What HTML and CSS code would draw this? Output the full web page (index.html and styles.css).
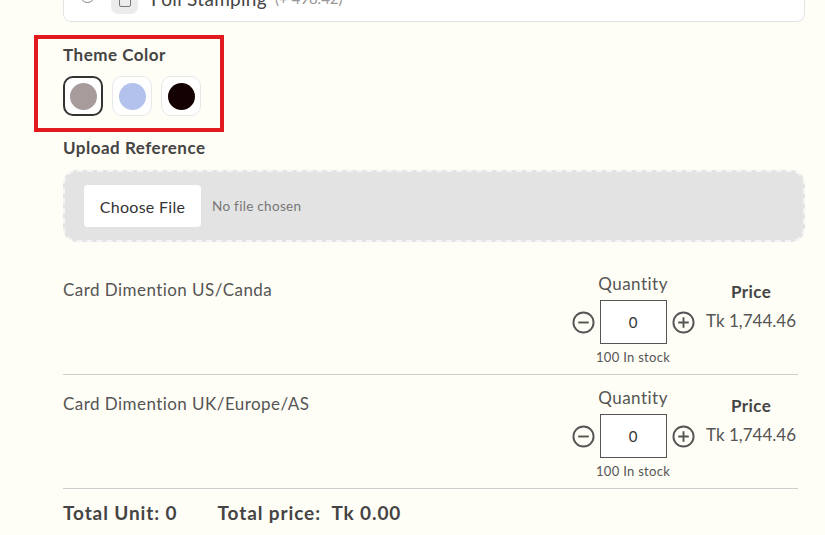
FILE: index.html
```html
<!DOCTYPE html>
<html lang="en">
<head>
<meta charset="utf-8">
<title>Card Options</title>
<link rel="stylesheet" href="styles.css">
</head>
<body>
<div class="page">
  <div class="option-card">
    <span class="radio"></span>
    <span class="opt-icon"><span class="opt-icon-inner"></span></span>
    <span class="opt-name">Foil Stamping</span>
    <span class="opt-price">(+ 498.42)</span>
  </div>

  <div class="theme-box">
    <div class="label">Theme Color</div>
    <div class="swatches">
      <span class="swatch selected"><span class="dot dot-mauve"></span></span>
      <span class="swatch"><span class="dot dot-blue"></span></span>
      <span class="swatch"><span class="dot dot-black"></span></span>
    </div>
  </div>

  <div class="label upload-label">Upload Reference</div>
  <div class="upload">
    <span class="file-btn">Choose File</span>
    <span class="file-status">No file chosen</span>
  </div>

  <div class="rows">
    <div class="row">
      <div class="row-title">Card Dimention US/Canda</div>
      <div class="qty">
        <div class="qty-label">Quantity</div>
        <div class="qty-controls">
          <svg class="qty-icon" viewBox="0 0 24 24"><circle cx="12" cy="12" r="10.5" fill="none" stroke="#555" stroke-width="2"/><path d="M6.5 12h11" stroke="#555" stroke-width="2"/></svg>
          <span class="qty-input">0</span>
          <svg class="qty-icon" viewBox="0 0 24 24"><circle cx="12" cy="12" r="10.5" fill="none" stroke="#555" stroke-width="2"/><path d="M6.5 12h11M12 6.5v11" stroke="#555" stroke-width="2"/></svg>
        </div>
        <div class="stock">100 In stock</div>
      </div>
      <div class="price">
        <div class="price-label">Price</div>
        <div class="price-value">Tk 1,744.46</div>
      </div>
    </div>
    <div class="row">
      <div class="row-title">Card Dimention UK/Europe/AS</div>
      <div class="qty">
        <div class="qty-label">Quantity</div>
        <div class="qty-controls">
          <svg class="qty-icon" viewBox="0 0 24 24"><circle cx="12" cy="12" r="10.5" fill="none" stroke="#555" stroke-width="2"/><path d="M6.5 12h11" stroke="#555" stroke-width="2"/></svg>
          <span class="qty-input">0</span>
          <svg class="qty-icon" viewBox="0 0 24 24"><circle cx="12" cy="12" r="10.5" fill="none" stroke="#555" stroke-width="2"/><path d="M6.5 12h11M12 6.5v11" stroke="#555" stroke-width="2"/></svg>
        </div>
        <div class="stock">100 In stock</div>
      </div>
      <div class="price">
        <div class="price-label">Price</div>
        <div class="price-value">Tk 1,744.46</div>
      </div>
    </div>
  </div>

  <div class="totals">
    <span>Total Unit: 0</span>
    <span class="total-price">Total price:&nbsp;&nbsp;Tk 0.00</span>
  </div>
</div>
</body>
</html>
```

FILE: styles.css
```css
html, body {
  margin: 0;
  padding: 0;
  background: #fffef6;
}
body {
  font-family: "Lato", "Liberation Sans", sans-serif;
  color: #555;
  overflow: hidden;
}
.page {
  padding-left: 63px;
  width: 742px;
}
.option-card {
  margin-top: -26px;
  height: 48px;
  background: #fff;
  border: 1px solid #e3e3e3;
  border-radius: 8px;
  display: flex;
  align-items: center;
  padding-left: 16px;
  box-sizing: border-box;
}
.radio {
  width: 13px;
  height: 13px;
  border: 1px solid #888;
  border-radius: 50%;
  background: #fff;
  margin-top: -6px;
}
.opt-icon {
  margin-left: 16px;
  width: 27px;
  height: 27px;
  border-radius: 7px;
  background: #ececec;
  display: flex;
  align-items: center;
  justify-content: center;
  margin-top: 4px;
}
.opt-icon-inner {
  width: 10px;
  height: 12px;
  border: 1px solid #777;
  border-radius: 2px;
}
.opt-name {
  margin-left: 13px;
  font-size: 19px;
  color: #444;
  letter-spacing: 0.3px;
}
.opt-price {
  margin-left: 8px;
  font-size: 15px;
  color: #999;
}
.theme-box {
  margin-top: 13px;
  margin-left: -29px;
  width: 190px;
  box-sizing: border-box;
  border: 4px solid #e2191d;
  padding: 6px 0 12px 25px;
}
.label {
  font-size: 17px;
  font-weight: 700;
  color: #444;
  line-height: 20px;
  letter-spacing: 0.5px;
}
.swatches {
  display: flex;
  gap: 9px;
  margin-top: 11px;
}
.swatch {
  width: 38px;
  height: 38px;
  border: 1px solid #e8e8e8;
  border-radius: 10px;
  background: #fff;
  display: flex;
  align-items: center;
  justify-content: center;
}
.swatch.selected {
  width: 36px;
  height: 36px;
  border: 2px solid #333;
}
.dot {
  width: 27px;
  height: 27px;
  border-radius: 50%;
}
.dot-mauve { background: #a89b9b; }
.dot-blue { background: #b2c2ec; }
.dot-black { background: #130000; }
.upload-label {
  margin-top: 6px;
}
.upload {
  margin-top: 12px;
  height: 72px;
  box-sizing: border-box;
  background: #e3e3e3;
  border: 2px dashed #f4f4f4;
  border-radius: 14px;
  display: flex;
  align-items: center;
  padding-left: 19px;
}
.file-btn {
  width: 117px;
  height: 42px;
  background: #fff;
  border-radius: 4px;
  display: flex;
  align-items: center;
  justify-content: center;
  font-size: 16px;
  color: #333;
  letter-spacing: 0.3px;
}
.file-status {
  margin-left: 11px;
  font-size: 13.5px;
  color: #777;
  letter-spacing: 0.3px;
}
.rows {
  margin-top: 19px;
  margin-right: 7px;
}
.row {
  display: flex;
  border-bottom: 1px solid #cfcfcf;
  padding: 11px 0 9px;
}
.row-title {
  flex: 1;
  margin-top: 6px;
  font-size: 17px;
  line-height: 24px;
  letter-spacing: 0.45px;
}
.qty {
  display: flex;
  flex-direction: column;
  align-items: center;
  width: 124px;
  flex-shrink: 0;
}
.qty-label {
  font-size: 17px;
  line-height: 24px;
  letter-spacing: 0.5px;
}
.qty-controls {
  display: flex;
  align-items: center;
  gap: 5px;
  margin-top: 4px;
}
.qty-icon {
  width: 23px;
  height: 23px;
}
.qty-input {
  width: 65px;
  height: 42px;
  border: 1px solid #555;
  background: #fff;
  display: flex;
  align-items: center;
  justify-content: center;
  font-size: 15px;
  color: #333;
}
.stock {
  margin-top: 5px;
  font-size: 13px;
  line-height: 16px;
  color: #555;
  letter-spacing: 0.3px;
}
.price {
  margin-left: 11px;
  margin-right: 2px;
  margin-top: 8px;
  flex-shrink: 0;
  display: flex;
  flex-direction: column;
  align-items: center;
  white-space: nowrap;
}
.price-label {
  font-size: 17px;
  font-weight: 700;
  color: #444;
  line-height: 24px;
  letter-spacing: 0.4px;
}
.price-value {
  margin-top: 5px;
  font-size: 17px;
  line-height: 24px;
}
.totals {
  margin-top: 12px;
  font-size: 19px;
  font-weight: 700;
  color: #444;
  line-height: 24px;
  letter-spacing: 0.9px;
  display: flex;
}
.total-price {
  margin-left: 40px;
}
```
